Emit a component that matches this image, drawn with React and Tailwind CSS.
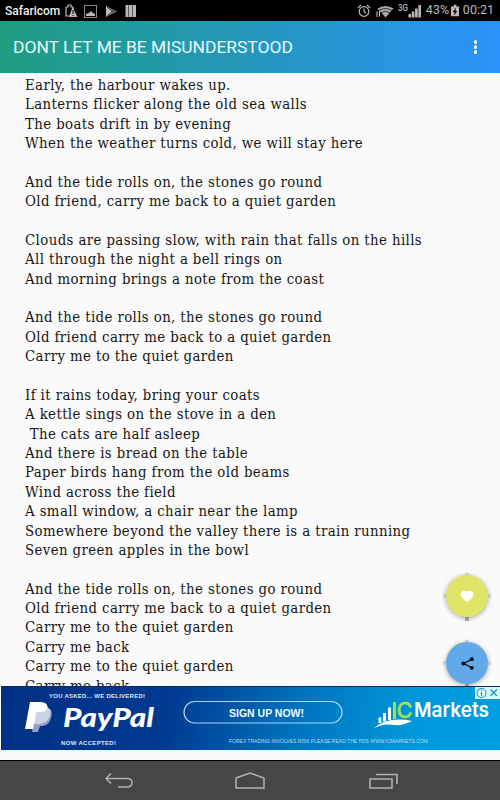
import { Heart } from "lucide-react";

const verses = [
  [
    "Early, the harbour wakes up.",
    "Lanterns flicker along the old sea walls",
    "The boats drift in by evening",
    "When the weather turns cold, we will stay here",
  ],
  [
    "And the tide rolls on, the stones go round",
    "Old friend, carry me back to a quiet garden",
  ],
  [
    "Clouds are passing slow, with rain that falls on the hills",
    "All through the night a bell rings on",
    "And morning brings a note from the coast",
  ],
  [
    "And the tide rolls on, the stones go round",
    "Old friend carry me back to a quiet garden",
    "Carry me to the quiet garden",
  ],
  [
    "If it rains today, bring your coats",
    "A kettle sings on the stove in a den",
    " The cats are half asleep",
    "And there is bread on the table",
    "Paper birds hang from the old beams",
    "Wind across the field",
    "A small window, a chair near the lamp",
    "Somewhere beyond the valley there is a train running",
    "Seven green apples in the bowl",
  ],
  [
    "And the tide rolls on, the stones go round",
    "Old friend carry me back to a quiet garden",
    "Carry me to the quiet garden",
    "Carry me back",
    "Carry me to the quiet garden",
    "Carry me back",
  ],
];

const StatusBar = () => (
  <div className="h-[21px] shrink-0 bg-black flex items-center justify-between pl-[5px] pr-[6px] font-[Roboto,sans-serif] text-[#b8b8b8]">
    <div className="flex items-center">
      <span className="text-[12px] font-medium text-[#eee] w-[56px] whitespace-nowrap">Safaricom</span>
      <svg width="76" height="16" viewBox="0 0 76 16" className="ml-[3px]">
        <path d="M2 4h2V2h3v2h2v3M2 4v9h5" fill="none" stroke="currentColor" strokeWidth="1.2" />
        <path d="M8.500 4l5 10H5z" fill="currentColor" />
        <path d="M9 7v4M9 12v1" stroke="#000" />
        <rect x="20.500" y="2.500" width="12" height="12" fill="none" stroke="#888" />
        <path d="M22 13v-2l3-1 2-2 2 2 2 1v2z" fill="currentColor" />
        <path d="M42 3l11 5.500L42 14z" fill="#777" />
        <path d="M42 3l6 5.500-6 5.500z" fill="#bbb" />
        <path d="M43 4l8 7M43 13l8-7" stroke="#333" strokeWidth=".8" />
        <path d="M61.500 2h3v12h-3zM65 2h3.200v12H65zM68.700 2H72v12h-3.300z" fill="currentColor" />
      </svg>
    </div>
    <div className="flex items-center">
      <svg width="66" height="18" viewBox="0 0 66 18" className="mr-[2px]">
        <circle cx="7" cy="9.500" r="4.800" fill="none" stroke="currentColor" strokeWidth="1.200" />
        <path d="M7 6.500v3l2 1.800M1 6l3-3M13 6l-3-3" fill="none" stroke="currentColor" strokeWidth="1.200" />
        <path d="M20.500 6.500q8-5 16 0l-8 9z" fill="#aaa" />
        <path d="M22 8.500q6.500-4 13 0M24 10.800q4.500-3 9 0" fill="none" stroke="#000" strokeWidth=".7" />
        <path d="M20 9.500V15M22.500 9v5.500" stroke="#ccc" strokeWidth="1" />
        <text x="41" y="8.500" fill="currentColor" fontSize="8.500" fontWeight="500" textLength="10" lengthAdjust="spacingAndGlyphs" className="font-[Roboto,sans-serif]">3G</text>
        <path d="M51.500 12h2.600v3.500h-2.600zM54.800 9.500h2.600v6h-2.600zM58.100 6.500h2.600v9h-2.600zM61.400 3H64v12.500h-2.600z" fill="currentColor" />
      </svg>
      <span className="text-[12.5px] w-[25px] ml-[1px] whitespace-nowrap">43%</span>
      <svg width="8" height="14" viewBox="0 0 9 14">
        <path d="M3 0h3v2h3v11H0V2h3z" fill="currentColor" />
        <path d="M5.500 3L2 8h2l-.5 4L7 7H5z" fill="#000" />
      </svg>
      <span className="text-[12.5px] ml-1">00:21</span>
    </div>
  </div>
);

const TitleBar = () => (
  <header className="h-[52px] shrink-0 bg-linear-to-r from-[#209d80] via-[#2597bd] to-[#2d91fb] flex items-center justify-between pl-[13px] pr-[23px] text-[#e9fbff]">
    <h1 className="font-[Roboto,sans-serif] text-[17.4px] whitespace-nowrap">DONT LET ME BE MISUNDERSTOOD</h1>
    <div className="flex flex-col gap-[1.5px]">
      <i className="size-[3.5px] rounded-full bg-current" />
      <i className="size-[3.5px] rounded-full bg-current" />
      <i className="size-[3.5px] rounded-full bg-current" />
    </div>
  </header>
);

const Banner = () => (
  <div className="relative w-full h-[64px] shrink-0 border-l border-white bg-[linear-gradient(100deg,#003083_0%,#003b91_34%,#0073bd_59%,#0098da_82%,#009fe0_100%)]">
    <svg width="499" height="64" viewBox="1 0 499 64">
      <path d="M0 .5h500" stroke="#002b65" />
      <g fontFamily="Liberation Sans, sans-serif" fontWeight="700" fontSize="6" fill="#dce8ff">
        <text x="49" y="11.500" textLength="96">YOU ASKED... WE DELIVERED!</text>
        <text x="61" y="59" textLength="55">NOW ACCEPTED!</text>
      </g>
      <path d="M36 21h8c7 0 9 4 7 11s-6 8-11 8l-2 6h-6z" fill="#8e9fc9" />
      <path d="M30 16h10c7 0 9 4 7 10s-6 9-12 9l-2 8h-8z" fill="#fff" />
      <path d="M36 26h5q5 0 6.500-4 4.500 2 2.500 8-3 8-11 8h-4z" fill="#cbd2e3" />
      <text x="63" y="41" fill="#fff" fontFamily="Lato, sans-serif" fontWeight="900" fontStyle="italic" fontSize="26" textLength="91" lengthAdjust="spacingAndGlyphs">PayPal</text>
      <rect x="184" y="15.500" width="158" height="21.500" rx="10.750" fill="none" stroke="#afd5f4" strokeWidth="1.200" />
      <text x="229" y="31" fill="#f3faff" fontFamily="Liberation Sans, sans-serif" fontWeight="700" fontSize="10.500" textLength="75">SIGN UP NOW!</text>
      <text x="229" y="57" fill="#b5dcf4" fontFamily="Liberation Sans, sans-serif" fontSize="5.500" textLength="199" lengthAdjust="spacingAndGlyphs">FOREX TRADING  INVOLVES  RISK PLEASE READ THE  PDS WWW.ICMARKETS.COM</text>
      <path d="M378.500 31.500h2.800V37h-2.800zM383 27h3v8.500h-3zM388 21.500h3V34h-3z" fill="#fff" />
      <path d="M393 16h3v17h-3z" fill="#a5df50" />
      <path d="M373 43q14-13 39-8-9 5-18 4-12-2-21 4z" fill="#fff" />
      <text x="396.500" y="32" fill="#a5df50" stroke="#a5df50" strokeWidth=".4" fontFamily="Inter, sans-serif" fontWeight="500" fontSize="21" textLength="16" lengthAdjust="spacingAndGlyphs">C</text>
      <text x="414" y="31" fill="#fff" fontFamily="Inter, sans-serif" fontWeight="600" fontSize="20.500" textLength="75" lengthAdjust="spacingAndGlyphs">Markets</text>
      <path d="M475 1h25v12h-25z" fill="#dcfaff" />
      <g fill="none" stroke="#009bb5" strokeWidth="1.100">
        <circle cx="481.500" cy="7" r="4.500" />
        <path d="M481.500 6v4M481.500 4v1M490.500 3.500l6.500 6.500M497 3.500l-6.500 6.500" />
      </g>
    </svg>
  </div>
);

const FloatingButton = ({ className, children }) => (
  <div className={`absolute left-[446px] size-[42px] rounded-full flex items-center justify-center shadow-[0_1px_5px_rgba(0,0,0,0.35)] ${className}`}>
    <i className="absolute -top-[2px] w-1 h-[2px] bg-black/10" />
    <i className="absolute -bottom-[4px] w-1 h-[4px] bg-black/30" />
    <i className="absolute -left-[3px] w-[3px] h-1 bg-black/10" />
    <i className="absolute -right-[3px] w-[3px] h-1 bg-black/10" />
    {children}
  </div>
);

const NavBar = () => (
  <nav className="h-[40px] shrink-0 bg-[#464646] border-t border-black flex items-center pl-[104px]">
    <svg width="30" height="18" viewBox="0 0 30 18" fill="none" stroke="#b2b2b2" strokeWidth="1.500">
      <path d="M7 1.500L2 6.500l5 5M2 6.500h21q5 0 5 4.200t-5 4.300H14" />
    </svg>
    <svg width="32" height="18" viewBox="0 0 32 18" fill="none" stroke="#b2b2b2" strokeWidth="1.500" className="ml-[100px]">
      <path d="M2 6l14-5 14 5v10H2z" />
    </svg>
    <svg width="30" height="18" viewBox="0 0 30 18" fill="none" stroke="#b2b2b2" strokeWidth="1.600" className="ml-[103px]">
      <path d="M1 7h22v9H1zM7 2.500h21V12" />
    </svg>
  </nav>
);

const App = () => {
  return (
    <div className="relative w-[500px] h-[800px] overflow-hidden flex flex-col bg-[#fafafa]">
      <StatusBar />
      <TitleBar />
      <main className="h-[613px] shrink-0 overflow-hidden pl-[25px] pt-[2px]">
        <div className="flex flex-col gap-[19.37px] font-['DejaVu_Serif_Condensed','DejaVu_Serif',serif] text-[14.8px] leading-[19.37px] tracking-[0.4px] text-[#161616] whitespace-pre">
          {verses.map((lines, i) => (
            <div key={i}>
              {lines.map((line, j) => (
                <p key={j}>{line}</p>
              ))}
            </div>
          ))}
        </div>
      </main>
      <FloatingButton className="top-[575px] bg-[#dfe566]">
        <Heart size={14} fill="white" className="text-white" />
      </FloatingButton>
      <FloatingButton className="top-[642px] bg-[#62a9e9]">
        <svg width="13" height="13" viewBox="0 0 13 13">
          <path d="M11 2.200L2.500 6.500l8.500 4.300" fill="none" stroke="#000" strokeWidth="1.100" />
          <circle cx="10.800" cy="2.200" r="1.900" />
          <circle cx="2.300" cy="6.500" r="1.900" />
          <circle cx="10.800" cy="10.800" r="1.900" />
        </svg>
      </FloatingButton>
      <Banner />
      <div className="h-[10px] shrink-0 bg-linear-to-b from-[#dffcff] to-[#fafafa] to-30%" />
      <NavBar />
    </div>
  );
};

export default App;
